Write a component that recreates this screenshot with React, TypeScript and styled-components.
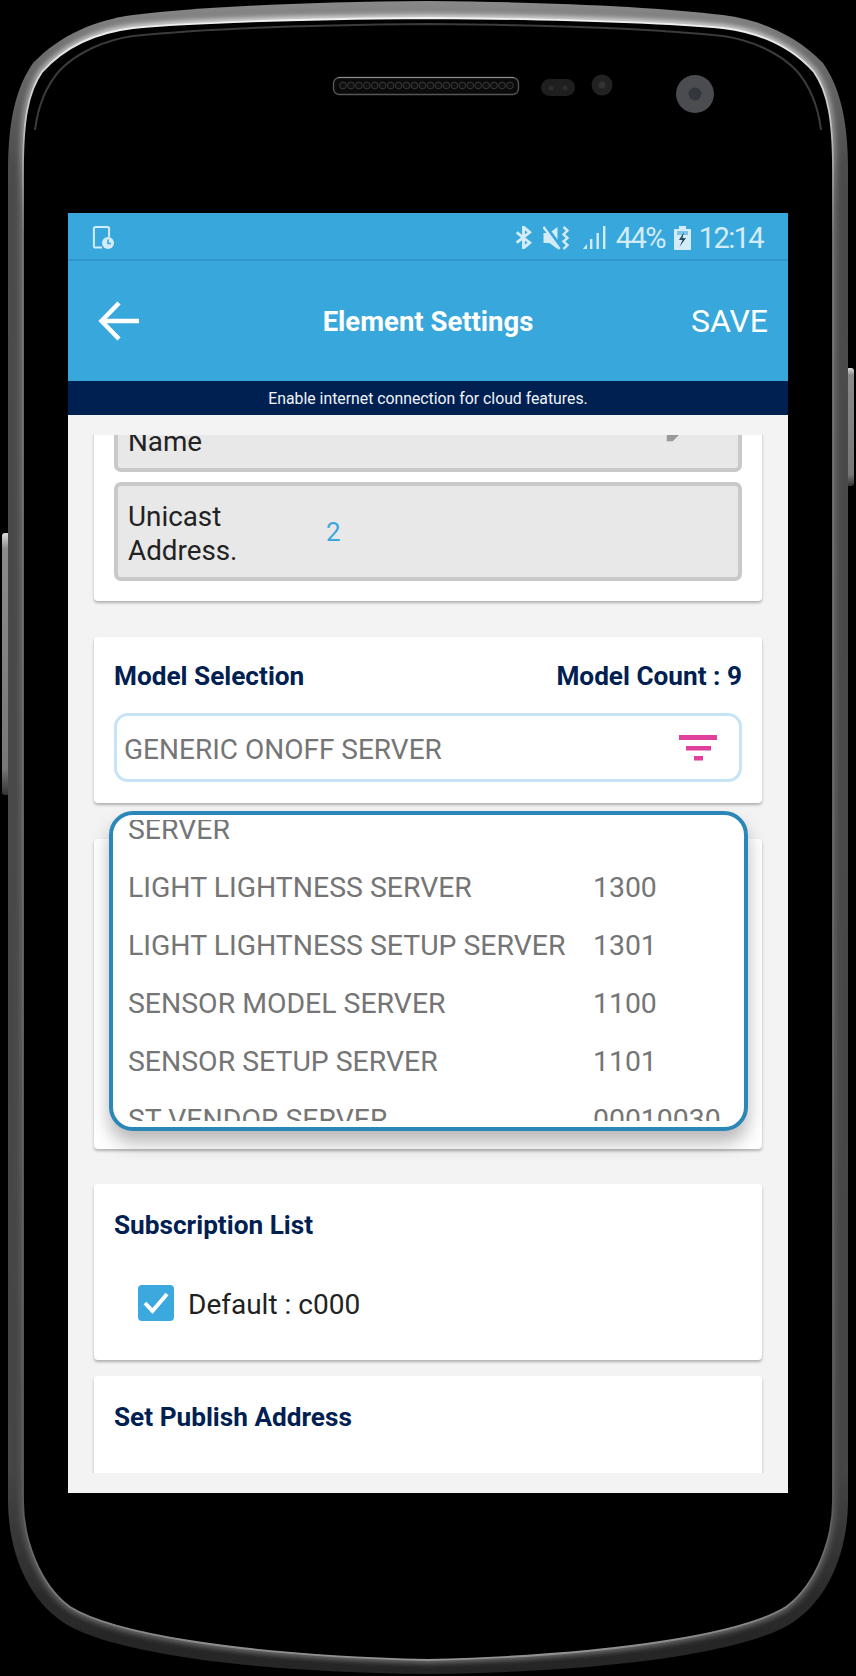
import React from "react";
import styled, { createGlobalStyle } from "styled-components";

const Global = createGlobalStyle`
  html, body { margin: 0; padding: 0; background: #000; }
  body { font-family: Roboto, "Liberation Sans", sans-serif; }
  * { box-sizing: border-box; }
`;

const Stage = styled.div`
  position: relative;
  width: 856px;
  height: 1676px;
  background: #000;
  padding: 213px 68px 183px;
  overflow: hidden;
`;

const FrameArt = styled.svg`
  position: absolute;
  inset: 0;
`;

const Screen = styled.div`
  position: relative;
  width: 720px;
  height: 1280px;
  background: #f3f3f4;
  display: flex;
  flex-direction: column;
`;

const StatusBar = styled.div`
  height: 48px;
  flex: none;
  background: #38a8dc;
  border-bottom: 2px solid #2f97c9;
  display: flex;
  align-items: center;
  padding: 3px 25px 0 24px;
  color: #d4ecf9;
`;

const StatusRight = styled.div`
  margin-left: auto;
  display: flex;
  align-items: center;
`;

const StatusText = styled.span<{ $ml: number }>`
  font-size: 29px;
  letter-spacing: -1.6px;
  line-height: 30px;
  margin-left: ${(p) => p.$ml}px;
`;

const StatusIcon = styled.svg<{ $ml?: number }>`
  display: block;
  flex: none;
  margin-left: ${(p) => p.$ml ?? 0}px;
`;

const Toolbar = styled.div`
  position: relative;
  height: 120px;
  flex: none;
  background: #38a8dc;
  display: flex;
  align-items: center;
  justify-content: space-between;
  padding: 0 20px 0 30px;
  color: #fff;
`;

const Title = styled.div`
  position: absolute;
  left: 0;
  right: 0;
  text-align: center;
  font-size: 27.5px;
  font-weight: 700;
  padding-top: 1px;
`;

const SaveAction = styled.div`
  font-size: 32px;
  font-weight: 400;
`;

const Banner = styled.div`
  height: 34px;
  flex: none;
  background: #002052;
  color: #f0f4f8;
  font-size: 15.8px;
  line-height: 36px;
  text-align: center;
`;

const ScrollArea = styled.div`
  margin-top: 20px;
  height: 1038px;
  overflow: hidden;
`;

const ScrollContent = styled.div`
  margin-top: -82px;
  padding: 0 26px;
  display: flex;
  flex-direction: column;
`;

const Card = styled.section<{ $gap: number }>`
  background: #fff;
  border-radius: 4px;
  box-shadow: 0 2px 3px rgba(0, 0, 0, 0.28);
  margin-bottom: ${(p) => p.$gap}px;
`;

const InfoCard = styled(Card)`
  padding: 20px;
  display: flex;
  flex-direction: column;
  gap: 10px;
`;

const ModelCard = styled(Card)`
  padding: 20px 20px 21px;
`;

const ModelListCard = styled(Card)`
  height: 310px;
`;

const SubscriptionCard = styled(Card)`
  padding: 22px 20px 39px;
`;

const PublishCard = styled(Card)`
  padding: 22px 20px 0;
  height: 160px;
`;

const Field = styled.div`
  height: 99px;
  background: #e8e8e8;
  border: 4px solid #c9c9c9;
  border-radius: 7px;
  padding: 0 38px 0 10px;
  display: flex;
  align-items: center;
`;

const FieldLabel = styled.div`
  width: 198px;
  flex: none;
  font-size: 27.8px;
  line-height: 34px;
  padding-top: 4px;
  color: #222;
`;

const FieldValue = styled.div`
  font-size: 26px;
  color: #38a8dc;
`;

const PencilIcon = styled.svg`
  margin-left: auto;
  margin-top: 8px;
  flex: none;
`;

const HeaderRow = styled.div`
  display: flex;
  justify-content: space-between;
  margin-bottom: 20px;
`;

const SectionTitle = styled.h2`
  margin: 0;
  font-size: 26.2px;
  line-height: 36px;
  padding-top: 1px;
  height: 36px;
  font-weight: 700;
  color: #002052;
`;

const FilterInput = styled.div`
  height: 69px;
  border: 3px solid #c6e4f6;
  border-radius: 14px;
  background: #fff;
  display: flex;
  align-items: center;
  justify-content: space-between;
  padding: 0 22px 0 7px;
  font-size: 28px;
  color: #757575;
`;

const FilterLabel = styled.span`
  padding-top: 3px;
`;

const ModelPopup = styled.div`
  position: absolute;
  left: 41px;
  top: 598px;
  width: 639px;
  height: 320px;
  background: #fff;
  border: 4px solid #2b87b8;
  border-radius: 24px;
  box-shadow: 0 12px 18px rgba(0, 0, 0, 0.28);
  padding: 5px 0 6px 15px;
`;

const ModelListClip = styled.div`
  height: 301px;
  overflow: hidden;
`;

const ModelList = styled.ul`
  list-style: none;
  margin: -20px 0 0;
  padding: 0;
`;

const ModelRow = styled.li`
  height: 58px;
  display: grid;
  grid-template-columns: 465px 1fr;
  align-items: center;
  font-size: 28.4px;
  color: #757575;
  white-space: nowrap;
`;

const CheckRow = styled.label`
  display: flex;
  align-items: center;
  gap: 14px;
  margin: 43px 0 0 24px;
  height: 36px;
  font-size: 28px;
  color: #222;
`;

const CheckText = styled.span`
  padding-top: 2px;
`;

const CheckBox = styled.span`
  width: 36px;
  height: 36px;
  flex: none;
  border-radius: 4px;
  background: #3ba8de;
  display: flex;
  align-items: center;
  justify-content: center;
`;

const RAW_OUTER =
  "M428 1C300 2 200 7 133 15C95 20 60 35 33 63C18 85 8 115 8 170L8 1500C8 1555 30 1605 71 1627C115 1650 230 1672 428 1674C626 1672 741 1650 785 1627C826 1605 848 1555 848 1500L848 170C848 115 838 85 823 63C796 35 761 20 723 15C656 7 556 2 428 1Z";
const RAW_INNER =
  "M428 18C300 19 200 22 133 28C100 32 66 45 42 72C28 92 23 120 23 170L23 1500C23 1540 40 1585 70 1607C110 1632 230 1655 428 1660C626 1655 746 1632 786 1607C816 1585 833 1540 833 1500L833 170C833 120 828 92 814 72C790 45 756 32 723 28C656 22 556 19 428 18Z";
const RAW_SHADOW =
  "M428 24C300 25 200 29 133 36C105 40 78 52 60 70C46 86 38 105 35 130M821 130C818 105 810 86 796 70C778 52 751 40 723 36C656 29 556 25 428 24";

const speakerHoles = Array.from({ length: 22 }, (_, i) => 343 + i * 7.95);

function PhoneFrame() {
  return (
    <FrameArt width="856" height="1676" viewBox="0 0 856 1676">
      <defs>
        <linearGradient id="band" x1="0" y1="0" x2="0" y2="1676" gradientUnits="userSpaceOnUse">
          <stop offset="0" stopColor="#8a8a8a" />
          <stop offset="0.03" stopColor="#6e6e6e" />
          <stop offset="0.1" stopColor="#4c4c4c" />
          <stop offset="0.88" stopColor="#444" />
          <stop offset="0.95" stopColor="#2c2c2c" />
          <stop offset="1" stopColor="#242424" />
        </linearGradient>
        <linearGradient id="glow" x1="0" y1="0" x2="0" y2="1676" gradientUnits="userSpaceOnUse">
          <stop offset="0" stopColor="#e8e8e8" />
          <stop offset="0.05" stopColor="#aaa" />
          <stop offset="0.12" stopColor="#6c6c6c" />
          <stop offset="0.9" stopColor="#555" />
          <stop offset="1" stopColor="#6e6e6e" />
        </linearGradient>
        <linearGradient id="edge" x1="0" y1="0" x2="0" y2="1676" gradientUnits="userSpaceOnUse">
          <stop offset="0" stopColor="#fafafa" />
          <stop offset="0.07" stopColor="#c4c4c4" />
          <stop offset="0.14" stopColor="#777" />
          <stop offset="0.9" stopColor="#5a5a5a" />
          <stop offset="1" stopColor="#999" />
        </linearGradient>
        <linearGradient id="key" x1="0" y1="0" x2="0" y2="1">
          <stop offset="0" stopColor="#ddd" />
          <stop offset="0.06" stopColor="#8a8a8a" />
          <stop offset="0.9" stopColor="#777" />
          <stop offset="1" stopColor="#333" />
        </linearGradient>
        <filter id="soft"><feGaussianBlur stdDeviation="0.7" /></filter>
        <filter id="wide"><feGaussianBlur stdDeviation="2.500" /></filter>
        <clipPath id="bandClip"><path d={RAW_OUTER} /></clipPath>
      </defs>
      <rect x="2" y="533" width="8" height="262" rx="3" fill="url(#key)" />
      <rect x="846" y="368" width="8" height="118" rx="3" fill="url(#key)" />
      <g filter="url(#soft)">
        <path d={RAW_OUTER} fill="url(#band)" />
        <g clipPath="url(#bandClip)">
          <path d={RAW_INNER} fill="none" stroke="url(#glow)" strokeWidth="7" filter="url(#wide)" />
        </g>
        <path d={RAW_INNER} fill="#000" stroke="url(#edge)" strokeWidth="1.800" />
        <path d={RAW_SHADOW} fill="none" stroke="#3a3a3a" strokeWidth="2" />
      </g>
      <rect x="333.500" y="77.500" width="185" height="17" rx="6" fill="#0a0a0a" stroke="#555" strokeWidth="1.400" />
      <path d="M338 77.500H514" stroke="#8a8a8a" strokeWidth="1.200" />
      {speakerHoles.map((x) => (
        <circle key={x} cx={x} cy="85.500" r="3.400" fill="#111" stroke="#444" strokeWidth="0.800" />
      ))}
      <rect x="541" y="79" width="34" height="17" rx="8.500" fill="#1f1f1f" />
      <circle cx="551" cy="88" r="2.500" fill="#2e2e2e" />
      <circle cx="565" cy="88" r="2.500" fill="#2e2e2e" />
      <circle cx="602" cy="85" r="10.500" fill="#222" />
      <circle cx="602" cy="85" r="3.500" fill="#333" />
      <circle cx="695" cy="94" r="19" fill="#4a4c50" />
      <circle cx="695" cy="94" r="6.500" fill="#33363d" />
    </FrameArt>
  );
}

const models = [
  { name: "SERVER", id: "" },
  { name: "LIGHT LIGHTNESS SERVER", id: "1300" },
  { name: "LIGHT LIGHTNESS SETUP SERVER", id: "1301" },
  { name: "SENSOR MODEL SERVER", id: "1100" },
  { name: "SENSOR SETUP SERVER", id: "1101" },
  { name: "ST VENDOR SERVER", id: "00010030" },
];

export default function App() {
  return (
    <Stage>
      <Global />
      <PhoneFrame />
      <Screen>
        <StatusBar>
          <StatusIcon width="24" height="24" viewBox="0 0 24 24">
            <path d="M10 21.500H3.500a1.600 1.600 0 0 1-1.600-1.600V2.600A1.600 1.600 0 0 1 3.500 1h12a1.600 1.600 0 0 1 1.600 1.600V11" fill="none" stroke="#d4ecf9" strokeWidth="2" />
            <circle cx="16" cy="17" r="6" fill="#d4ecf9" />
            <path d="M16 13.500V17.500H19" fill="none" stroke="#38a8dc" strokeWidth="1.600" />
          </StatusIcon>
          <StatusRight>
            <StatusIcon width="17" height="23" viewBox="0 0 16 22">
              <path d="M1.500 6L14 16L8 21V1L14 6L1.500 16" fill="none" stroke="#d4ecf9" strokeWidth="2.800" />
            </StatusIcon>
            <StatusIcon $ml={11} width="27" height="24" viewBox="0 0 26 24">
              <path d="M0 7H6L14 1V23L6 17H0Z" fill="#d4ecf9" />
              <path d="M2 0L18 22" stroke="#38a8dc" strokeWidth="3.500" />
              <path d="M0 1L16 23" stroke="#d4ecf9" strokeWidth="2.400" />
              <path d="M20 1L24 4.500L20 8.500L24 12L20 15.500L24 19L20 23" fill="none" stroke="#d4ecf9" strokeWidth="2.400" />
            </StatusIcon>
            <StatusIcon $ml={13} width="23" height="23" viewBox="0 0 23 23">
              <path d="M0 23L4 18V23Z" fill="#d4ecf9" />
              <rect x="7" y="13" width="2.400" height="10" fill="#d4ecf9" />
              <rect x="13.500" y="7" width="2.400" height="16" fill="#d4ecf9" />
              <rect x="20" y="0" width="2.400" height="23" fill="#d4ecf9" />
            </StatusIcon>
            <StatusText $ml={10}>44%</StatusText>
            <StatusIcon $ml={9} width="17" height="24" viewBox="0 0 17 24">
              <path d="M5 0H12V3H16A1 1 0 0 1 17 4V23A1 1 0 0 1 16 24H1A1 1 0 0 1 0 23V4A1 1 0 0 1 1 3H5Z" fill="#d4ecf9" />
              <path d="M3 5H14V9H3Z" fill="#7cc4e8" />
              <path d="M10 6L5 14H8.500L5.500 21L12 12H8.500Z" fill="#1f4f6b" />
            </StatusIcon>
            <StatusText $ml={8}>12:14</StatusText>
          </StatusRight>
        </StatusBar>
        <Toolbar>
          <svg width="42" height="40" viewBox="0 0 42 40" fill="none" stroke="#fff" strokeWidth="4.500">
            <path d="M41 20H4" />
            <path d="M21 2L3.500 20L21 38" />
          </svg>
          <Title>Element Settings</Title>
          <SaveAction>SAVE</SaveAction>
        </Toolbar>
        <Banner>Enable internet connection for cloud features.</Banner>
        <ScrollArea>
          <ScrollContent>
            <InfoCard $gap={36}>
              <Field>
                <FieldLabel>Element<br />Name</FieldLabel>
                <PencilIcon width="38" height="38" viewBox="0 0 24 24" fill="#999">
                  <path d="M3 17.250V21H6.750L17.810 9.940L14.060 6.190L3 17.250Z" />
                </PencilIcon>
              </Field>
              <Field>
                <FieldLabel>Unicast<br />Address.</FieldLabel>
                <FieldValue>2</FieldValue>
              </Field>
            </InfoCard>
            <ModelCard $gap={36}>
              <HeaderRow>
                <SectionTitle>Model Selection</SectionTitle>
                <SectionTitle>Model Count : 9</SectionTitle>
              </HeaderRow>
              <FilterInput>
                <FilterLabel>GENERIC ONOFF SERVER</FilterLabel>
                <svg width="38" height="26" viewBox="0 0 38 26" fill="#e0409c">
                  <rect x="0" y="0" width="38" height="5" />
                  <rect x="7" y="11" width="25" height="4.500" />
                  <rect x="15" y="21" width="9" height="4.500" />
                </svg>
              </FilterInput>
            </ModelCard>
            <ModelListCard $gap={35} />
            <SubscriptionCard $gap={16}>
              <SectionTitle>Subscription List</SectionTitle>
              <CheckRow>
                <CheckBox>
                  <svg width="26" height="22" viewBox="0 0 26 22" fill="none" stroke="#fff" strokeWidth="4">
                    <path d="M2 11L9.500 19L24 2" />
                  </svg>
                </CheckBox>
                <CheckText>Default : c000</CheckText>
              </CheckRow>
            </SubscriptionCard>
            <PublishCard $gap={0}>
              <SectionTitle>Set Publish Address</SectionTitle>
            </PublishCard>
          </ScrollContent>
        </ScrollArea>
        <ModelPopup>
          <ModelListClip>
            <ModelList>
              {models.map((m) => (
                <ModelRow key={m.name}>
                  <span>{m.name}</span>
                  <span>{m.id}</span>
                </ModelRow>
              ))}
            </ModelList>
          </ModelListClip>
        </ModelPopup>
      </Screen>
    </Stage>
  );
}
